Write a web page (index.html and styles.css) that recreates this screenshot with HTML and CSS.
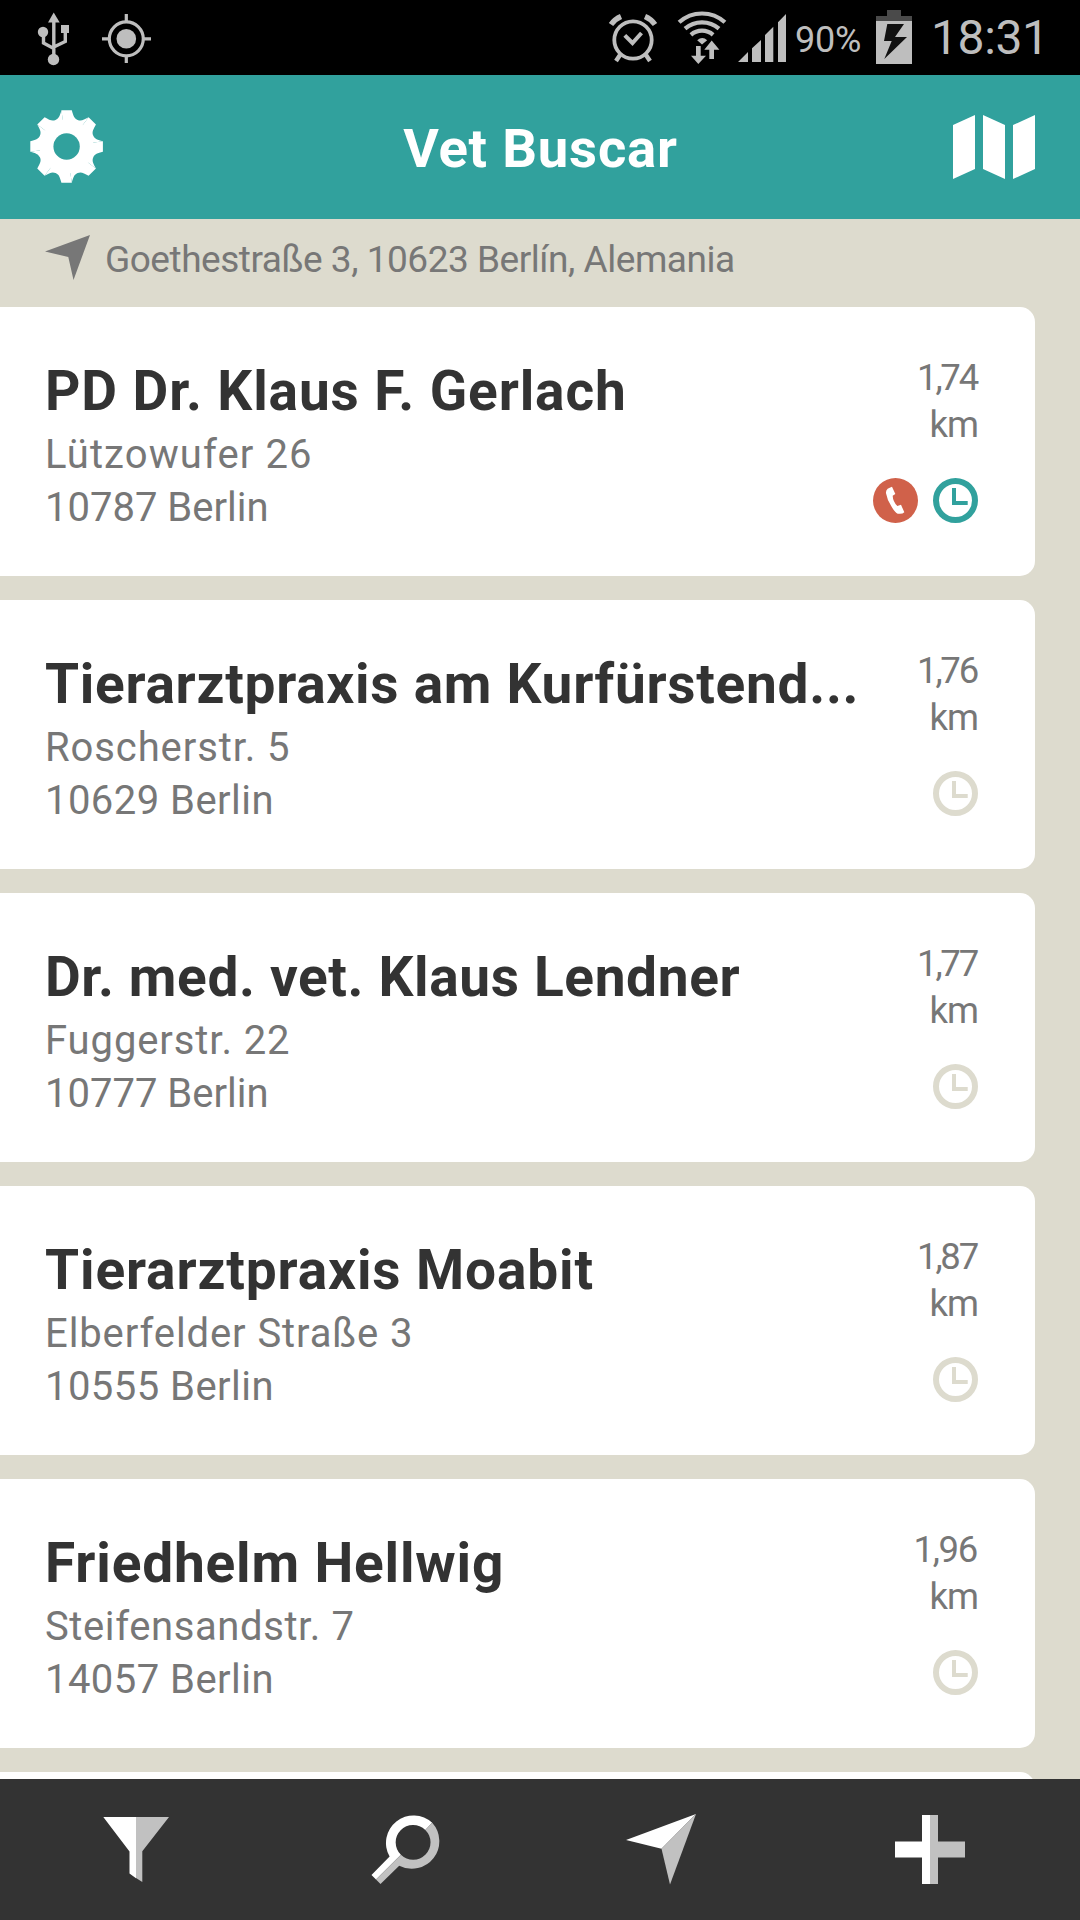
FILE: index.html
```html
<!DOCTYPE html>
<html lang="es">
<head>
<meta charset="utf-8">
<title>Vet Buscar</title>
<link rel="stylesheet" href="styles.css">
</head>
<body>
<svg class="defs" width="0" height="0">
  <symbol id="clock" viewBox="0 0 45 45">
    <circle cx="22.5" cy="22.5" r="19.5" fill="none" stroke="currentColor" stroke-width="6"/>
    <path d="M19 10h4v13h11.7v4H19z" fill="currentColor"/>
  </symbol>
  <symbol id="phone" viewBox="0 0 135 135">
    <circle cx="67.5" cy="67.5" r="67.5" fill="#d0614a"/>
    <path d="M39 46Q38 38 44 32Q50 29 57 26L67 48L59 53Q60 71 73 84L84 80L94 103Q88 109 74 107Q66 104 55 85Q43 68 39 46z" fill="#fff"/>
  </symbol>
</svg>
<div class="screen">
  <div class="status">
    <svg viewBox="0 0 160 75" width="160" height="75">
      <g fill="#bebebe">
        <path d="M53.7 12.5L59.7 22.5H48z"/>
        <circle cx="43" cy="32" r="5.2"/>
        <path d="M61 25h8v8h-8z"/>
        <circle cx="53.5" cy="59.5" r="5.7"/>
      </g>
      <path d="M53.8 20v36M43.5 32v11L53.8 48.5M65.3 32v9.5L53.8 47" fill="none" stroke="#bebebe" stroke-width="3.4"/>
      <circle cx="126.3" cy="38.8" r="9.8" fill="#bebebe"/>
      <circle cx="126.3" cy="38.8" r="17" fill="none" stroke="#bebebe" stroke-width="3.2"/>
      <path d="M126.3 14v7M126.3 56v7M102 38.8h7M144 38.8h7" stroke="#bebebe" stroke-width="3.2"/>
    </svg>
    <div class="status-right">
      <svg viewBox="600 0 190 75" width="190" height="75">
        <g fill="none" stroke="#bebebe">
          <circle cx="633" cy="40" r="18.7" stroke-width="3.8"/>
          <path d="M624.8 35.3l7.7 7.7 9-10" stroke-width="4"/>
          <path d="M611 24.5q4-5.5 10-8M655 24.5q-4-5.5-10-8" stroke-width="5.4"/>
          <path d="M620 55l-4 6M646 55l4 6" stroke-width="4.4"/>
          <path d="M679.1 22.3a34.2 34.2 0 0 1 45.8 0M685 28.7a25.8 25.8 0 0 1 34 0M690.9 34.8a17 17 0 0 1 22.2 0" stroke-width="4.2"/>
        </g>
        <g fill="#bebebe">
          <path d="M697.2 40.2q5.1-4.6 10 0L702 44.5z"/>
          <path d="M696 46h4.7v9.7h5.3L698.3 64 691 55.7h5z"/>
          <path d="M711.7 40.6l7.7 9.1h-5.4V59h-4.7v-9.3h-5z"/>
          <path d="M738 62l10-10v10zM752 48.3l9-8.3v22h-9zM765 35l8.3-8.3V62H765zM778 22.3l8-8.3v48h-8z"/>
        </g>
      </svg>
      <span class="percent">90%</span>
      <svg class="battery" viewBox="0 0 36 54" width="36" height="54">
        <path d="M11 0h14v6h11v5H0V6h11z" fill="#4a4a4a"/>
        <path d="M0 11h36v43H0z" fill="#bebebe"/>
        <path d="M11.3 14H28l-9 13h12L8.300 49l7.400-18H8z" fill="#111"/>
      </svg>
      <span class="time">18:31</span>
    </div>
  </div>

  <header class="header">
    <svg viewBox="-36.600 -36.500 74 74" width="74" height="74" fill="#fff">
      <g id="half">
        <g id="pair">
          <path id="tooth" d="M0 0L-5.200-36.300H5.200C6.800-31 7.300-28.100 11-26.600S17.100-26.700 22-29.300z"/>
          <use href="#tooth" transform="rotate(45)"/>
        </g>
        <use href="#pair" transform="rotate(90)"/>
      </g>
      <use href="#half" transform="rotate(180)"/>
      <circle r="27"/>
      <circle r="13.200" fill="#31a19d"/>
    </svg>
    <h1 class="heading">Vet Buscar</h1>
    <svg viewBox="0 0 82 64" width="82" height="64" fill="#fff">
      <path d="M0 10L22 0v54L0 64zM30 0l22 10v54L30 54zM60 10L82 0v54L60 64z"/>
    </svg>
  </header>

  <main class="content">
    <div class="location">
      <svg viewBox="0 0 45 45" width="45" height="45"><path d="M0 16.500L45 0 28.500 45 23.300 22z" fill="#777"/></svg>
      <span class="address">Goethestraße 3, 10623 Berlín, Alemania</span>
    </div>
    <ul class="list">
      <li class="card">
        <div class="info"><h2 class="name">PD Dr. Klaus F. Gerlach</h2><p class="line street">Lützowufer 26</p><p class="line city">10787 Berlin</p></div>
        <div class="side"><p class="dist"><span class="num">1,74</span><span>km</span></p><div class="marks"><svg class="mark"><use href="#phone"/></svg><svg class="mark open"><use href="#clock"/></svg></div></div>
      </li>
      <li class="card">
        <div class="info"><h2 class="name">Tierarztpraxis am Kurfürstend...</h2><p class="line street">Roscherstr. 5</p><p class="line city">10629 Berlin</p></div>
        <div class="side"><p class="dist"><span class="num">1,76</span><span>km</span></p><div class="marks"><svg class="mark"><use href="#clock"/></svg></div></div>
      </li>
      <li class="card">
        <div class="info"><h2 class="name">Dr. med. vet. Klaus Lendner</h2><p class="line street">Fuggerstr. 22</p><p class="line city">10777 Berlin</p></div>
        <div class="side"><p class="dist"><span class="num">1,77</span><span>km</span></p><div class="marks"><svg class="mark"><use href="#clock"/></svg></div></div>
      </li>
      <li class="card">
        <div class="info"><h2 class="name">Tierarztpraxis Moabit</h2><p class="line street">Elberfelder Straße 3</p><p class="line city">10555 Berlin</p></div>
        <div class="side"><p class="dist"><span class="num">1,87</span><span>km</span></p><div class="marks"><svg class="mark"><use href="#clock"/></svg></div></div>
      </li>
      <li class="card">
        <div class="info"><h2 class="name">Friedhelm Hellwig</h2><p class="line street">Steifensandstr. 7</p><p class="line city">14057 Berlin</p></div>
        <div class="side"><p class="dist"><span class="num">1,96</span><span>km</span></p><div class="marks"><svg class="mark"><use href="#clock"/></svg></div></div>
      </li>
      <li class="card"></li>
    </ul>
  </main>

  <nav class="toolbar">
    <svg viewBox="98 1809 76 80" width="76" height="80">
      <path d="M103.300 1817H136v61.300l-6.500-4.800v-22z" fill="#fff"/>
      <path d="M136 1817h33l-26.700 34.300V1882l-6.300-3.900z" fill="#c1c1c1"/>
    </svg>
    <svg viewBox="368 1809 76 80" width="76" height="80">
      <path d="M371.500 1875l18.100-18.400A27.500 27.500 0 0 1 432.200 1822.800L425.300 1829.900A17.200 17.200 0 0 0 400.900 1854.800L376 1879.500z" fill="#fff"/>
      <path d="M380.500 1884l18.700-18.300A27.500 27.500 0 0 0 432.200 1822.800L425.300 1829.900A17.200 17.200 0 0 1 400.900 1854.800L376 1879.500z" fill="#c1c1c1"/>
    </svg>
    <svg viewBox="623 1809 76 80" width="76" height="80">
      <path d="M696 1814L626 1840l35.500 8.700z" fill="#fff"/>
      <path d="M696 1814l-26 70.500-8.500-35.800z" fill="#c1c1c1"/>
    </svg>
    <svg viewBox="892 1809 76 80" width="76" height="80">
      <path d="M930 1815h-8v26.500h-27v16h27v26.500h8z" fill="#fff"/>
      <path d="M930 1815h8v26.500h27v16h-27v26.500h-8z" fill="#c1c1c1"/>
    </svg>
  </nav>
</div>
</body>
</html>
```
FILE: styles.css
```css
* { box-sizing: border-box; margin: 0; padding: 0; }
body { background: #dddbce; font-family: Roboto, "Liberation Sans", sans-serif; }
.defs { position: absolute; }
.screen { width: 1080px; height: 1920px; display: flex; flex-direction: column; overflow: hidden; }

.status { height: 75px; flex: none; background: #000; color: #bebebe; display: flex; justify-content: space-between; }
.status svg { display: block; flex: none; }
.status-right { display: flex; padding-right: 35px; }
.percent { font-size: 36px; line-height: 42px; padding: 19px 0 0 5px; width: 86px; letter-spacing: -0.2px; }
.battery { margin-top: 10px; margin-right: 19px; }
.time { font-size: 48px; line-height: 56px; padding-top: 10px; width: 114px; letter-spacing: -0.4px; }

.header { height: 144px; flex: none; background: #31a19d; display: grid; grid-template-columns: 82px 1fr 82px; align-items: center; padding: 0 45px 0 30px; }
.heading { color: #fff; font-size: 54.5px; font-weight: 700; letter-spacing: 0.8px; line-height: 64px; text-align: center; padding: 2px 0 0 16px; }

.content { flex: 1; min-height: 0; overflow: hidden; }
.location { height: 88px; display: flex; padding: 16px 0 0 45px; color: #777; }
.address { font-size: 37px; line-height: 44px; margin-left: 15px; padding-top: 3px; white-space: nowrap; letter-spacing: -0.47px; }

.list { list-style: none; display: flex; flex-direction: column; gap: 24px; }
.card { width: 1035px; height: 269px; flex: none; background: #fff; border-radius: 0 15px 15px 0; display: flex; justify-content: space-between; padding: 52px 57px 0 45px; }
.name { font-size: 55px; font-weight: 700; line-height: 64px; margin-bottom: 5px; color: #333; letter-spacing: 0.88px; white-space: nowrap; }
.line { font-size: 40px; line-height: 53px; color: #777; white-space: nowrap; }
.street { letter-spacing: 0.9px; }
.city { letter-spacing: 0.45px; }

/* Tracking adjusted per entry */
.card:nth-child(1) .street { letter-spacing: 1.1px; }
.card:nth-child(1) .city { letter-spacing: 0; }
.card:nth-child(2) .name { letter-spacing: 0.72px; }
.card:nth-child(3) .name { letter-spacing: 0.63px; }
.card:nth-child(3) .city { letter-spacing: 0; }
.card:nth-child(5) .name { letter-spacing: 0.82px; }
.card:nth-child(5) .street { letter-spacing: 0.6px; }

.side { display: flex; flex-direction: column; align-items: flex-end; }
.dist { display: flex; flex-direction: column; align-items: flex-end; font-size: 36.5px; line-height: 47px; color: #777; letter-spacing: -1px; margin-top: -5px; }
.num { letter-spacing: -2.2px; margin-right: 1px; }
.card:nth-child(5) .num { letter-spacing: -1.3px; }
.marks { display: flex; gap: 15px; margin-top: 30px; }
.mark { width: 45px; height: 45px; color: #dddbce; }
.mark.open { color: #31a19d; }

.toolbar { height: 141px; flex: none; background: #333; display: grid; grid-template-columns: 270px 255px 269px 76px; padding: 30px 0 0 98px; }
```
